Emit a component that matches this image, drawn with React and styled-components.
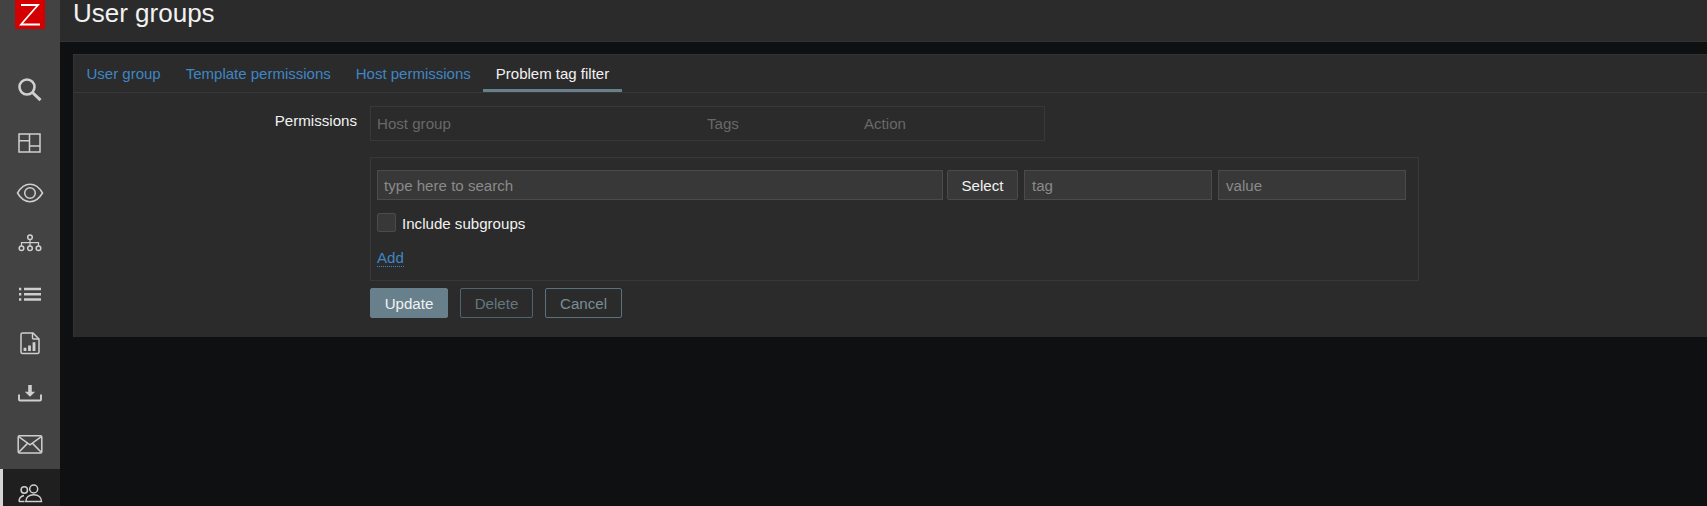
import React from "react";
import styled, { createGlobalStyle } from "styled-components";

const Global = createGlobalStyle`
  html, body { margin: 0; padding: 0; height: 100%; background: #0e1012; overflow: hidden; }
  * { box-sizing: border-box; }
  body { font-family: "Liberation Sans", Arial, sans-serif; font-size: 15.1px; }
`;

const Page = styled.div`
  display: grid;
  grid-template-columns: 60px 1fr;
  height: 506px;
  overflow: hidden;
`;

const Sidebar = styled.aside`
  background: #434343;
  box-shadow: 2px 0 4px rgba(0, 0, 0, 0.25);
  display: flex;
  flex-direction: column;
  overflow: hidden;
  height: 506px;
`;

const Logo = styled.div`
  width: 30px;
  height: 29px;
  margin-left: 15px;
  background: #d40000;
  flex: none;
  display: flex;
  align-items: center;
  justify-content: center;
`;

const SearchBox = styled.div`
  height: 50px;
  margin-top: 35px;
  margin-bottom: 4px;
  padding-right: 2px;
  flex: none;
  display: flex;
  align-items: center;
  justify-content: center;
`;

const NavItem = styled.div`
  height: ${(p) => (p.$active ? "50px" : "50.2px")};
  flex: none;
  display: flex;
  align-items: center;
  justify-content: center;
  background: ${(p) => (p.$active ? "#1f1f1f" : "transparent")};
  border-left: ${(p) => (p.$active ? "3px solid #d4d4d4" : "0")};
  padding-right: ${(p) => (p.$active ? "4px" : "1px")};
`;

const Main = styled.main`
  min-width: 0;
  display: flex;
  flex-direction: column;
`;

const Header = styled.header`
  height: 42px;
  background: #2b2b2b;
  border-bottom: 1px solid #333;
  padding-left: 13px;
  flex: none;
`;

const Title = styled.h1`
  margin: 0;
  font-weight: 400;
  font-size: 26px;
  line-height: 26px;
  color: #f2f2f2;
`;

const Content = styled.div`
  padding: 12px 0 0 13px;
  flex: 1;
  background: #0e1012;
`;

const Panel = styled.section`
  background: #2b2b2b;
  border-top: 1px solid #333;
  border-left: 1px solid #333;
  height: 283px;
`;

const Tabs = styled.nav`
  display: flex;
  height: 38px;
  border-bottom: 1px solid #383838;
  font-size: 15px;
`;

const Tab = styled.a`
  padding: 0 12.5px;
  height: 37px;
  line-height: 38px;
  color: ${(p) => (p.$active ? "#f2f2f2" : "#3f86c6")};
  border-bottom: 3px solid ${(p) => (p.$active ? "#68808c" : "transparent")};
  white-space: nowrap;
`;

const FormRow = styled.div`
  display: grid;
  grid-template-columns: 283px 1049px;
  column-gap: 13px;
  padding-top: 13px;
`;

const Label = styled.div`
  text-align: right;
  color: #f2f2f2;
  line-height: 24px;
  padding-top: 3px;
`;

const Fields = styled.div`
  display: flex;
  flex-direction: column;
`;

const PermTable = styled.div`
  width: 675px;
  height: 35px;
  border: 1px solid #383838;
  display: grid;
  grid-template-columns: 330px 157px 1fr;
  padding-left: 6px;
  align-items: center;
  color: #686868;
`;

const AddBox = styled.div`
  margin-top: 16px;
  height: 124px;
  border: 1px solid #383838;
  padding: 12px 6px 0;
`;

const InputRow = styled.div`
  display: flex;
  gap: 5px;
`;

const Input = styled.div`
  width: ${(p) => p.$w}px;
  height: 30px;
  margin-left: ${(p) => p.$offset || 0}px;
  background: #383838;
  border: 1px solid #4b4b4b;
  padding-left: ${(p) => p.$pad || 6}px;
  line-height: 29px;
  color: #8a8a8a;
`;

const SelectButton = styled.button`
  width: 71px;
  height: 30px;
  margin-left: -1px;
  margin-right: 1px;
  background: #383838;
  border: 1px solid #4b4b4b;
  border-radius: 2px;
  color: #f2f2f2;
  font: inherit;
  padding: 0;
`;

const CheckRow = styled.label`
  display: flex;
  align-items: center;
  gap: 6px;
  margin-top: 13px;
  height: 19px;
  color: #f2f2f2;
`;

const CheckText = styled.span`
  padding-top: 2px;
`;

const CheckBox = styled.span`
  width: 19px;
  height: 19px;
  background: #383838;
  border: 1px solid #4b4b4b;
  border-radius: 2px;
  flex: none;
`;

const AddLink = styled.a`
  display: inline-block;
  margin-top: 18px;
  color: #3f86c6;
  line-height: 16px;
  border-bottom: 1px dotted #3f86c6;
`;

const Actions = styled.div`
  display: flex;
  gap: 12px;
  margin-top: 7px;
`;

const ActionButton = styled.button`
  width: ${(p) => p.$w}px;
  height: 30px;
  padding: 0;
  font: inherit;
  border-radius: 2px;
  border: 1px solid ${(p) => (p.$primary ? "#68808c" : p.$muted ? "#50646f" : "#5a727e")};
  background: ${(p) => (p.$primary ? "#68808c" : "transparent")};
  color: ${(p) => (p.$primary ? "#f2f2f2" : p.$muted ? "#64777f" : "#788e98")};
`;

const Svg = ({ children }) => (
  <svg width="26" height="26" viewBox="0 0 26 26" fill="none" stroke="#cfcfcf" strokeWidth="1.5" style={{ overflow: "visible" }}>
    {children}
  </svg>
);

const icons = [
  <Svg key="d">
    <rect x="2" y="4" width="21" height="18" />
    <path d="M12.5 4v18M2 10.700h10.500M12.500 16H23" />
  </Svg>,
  <Svg key="e">
    <path d="M0.500 13C4 7 8 4.300 13 4.300S22 7 25.500 13C22 19 18 21.700 13 21.700S4 19 0.500 13z" />
    <circle cx="13" cy="13" r="5.300" />
  </Svg>,
  <Svg key="h">
    <circle cx="13" cy="7.300" r="2.300" />
    <circle cx="4.500" cy="18.300" r="2.300" />
    <circle cx="13" cy="18.300" r="2.300" />
    <circle cx="21.500" cy="18.300" r="2.300" />
    <path d="M13 9.600v6.400M4.500 16v-3.300h17V16" strokeWidth="1.200" />
  </Svg>,
  <Svg key="l">
    <path d="M2 8h2.300M7 8h17M2 13.300h2.300M7 13.300h17M2 18.500h2.300M7 18.500h17" strokeWidth="2.500" />
  </Svg>,
  <Svg key="r">
    <g transform="translate(0,-0.8)">
      <path d="M5.500 2.800h10.500l6 6v13a1.500 1.500 0 0 1-1.500 1.500h-15A1.500 1.500 0 0 1 4 21.800v-17.500a1.500 1.500 0 0 1 1.500-1.500z" />
      <path d="M15.500 2.800v5a1 1 0 0 0 1 1h5.500" />
      <path d="M8 20.800v-3.300M12.500 20.800v-5.600M17 20.800V12" strokeWidth="2.800" />
    </g>
  </Svg>,
  <Svg key="dl">
    <path d="M13 4v7.500" strokeWidth="3.600" />
    <path d="M7.800 10.700h10.400L13 15.800z" fill="#cfcfcf" stroke="none" />
    <path d="M2 13.500v5a1 1 0 0 0 1 1h20a1 1 0 0 0 1-1v-5" strokeWidth="1.900" />
  </Svg>,
  <Svg key="m">
    <rect x="1.200" y="4.700" width="23.600" height="17.300" rx="1.200" />
    <path d="M2 5.800l11 8 11-8M2 21l8.500-8.600M24 21l-8.500-8.600" />
  </Svg>,
];

const UsersIcon = () => (
  <Svg>
    <circle cx="7.300" cy="9" r="3.200" />
    <circle cx="16.700" cy="8" r="4" />
    <path d="M2 20.500c.1-3.200 1.800-5.400 5-6M2 20.500h5.500" />
    <path d="M8.800 20.500c0-4.200 3.200-6.800 7.900-6.800s7.800 2.600 7.800 6.800z" />
  </Svg>
);

export default function App() {
  return (
    <Page>
      <Global />
      <Sidebar>
        <Logo>
          <svg width="24" height="24" viewBox="0 0 24 24" fill="none" stroke="#fff" strokeWidth="1.800">
            <path d="M3 2h17L3 21.500h19" />
          </svg>
        </Logo>
        <SearchBox>
          <svg width="26" height="26" viewBox="0 0 26 26" fill="none" stroke="#cfcfcf">
            <circle cx="11" cy="11" r="7.500" strokeWidth="2.600" />
            <path d="M16.500 16.500l8 7.700" strokeWidth="3" />
          </svg>
        </SearchBox>
        {icons.map((icon) => (
          <NavItem key={icon.key}>{icon}</NavItem>
        ))}
        <NavItem $active>
          <UsersIcon />
        </NavItem>
      </Sidebar>
      <Main>
        <Header>
          <Title>User groups</Title>
        </Header>
        <Content>
          <Panel>
            <Tabs>
              <Tab>User group</Tab>
              <Tab>Template permissions</Tab>
              <Tab>Host permissions</Tab>
              <Tab $active>Problem tag filter</Tab>
            </Tabs>
            <FormRow>
              <Label>Permissions</Label>
              <Fields>
                <PermTable>
                  <span>Host group</span>
                  <span>Tags</span>
                  <span>Action</span>
                </PermTable>
                <AddBox>
                  <InputRow>
                    <Input $w={566}>type here to search</Input>
                    <SelectButton>Select</SelectButton>
                    <Input $w={188} $pad={7}>tag</Input>
                    <Input $w={188} $pad={7} $offset={1}>value</Input>
                  </InputRow>
                  <CheckRow>
                    <CheckBox />
                    <CheckText>Include subgroups</CheckText>
                  </CheckRow>
                  <AddLink>Add</AddLink>
                </AddBox>
                <Actions>
                  <ActionButton $primary $w={78}>Update</ActionButton>
                  <ActionButton $muted $w={73}>Delete</ActionButton>
                  <ActionButton $w={77}>Cancel</ActionButton>
                </Actions>
              </Fields>
            </FormRow>
          </Panel>
        </Content>
      </Main>
    </Page>
  );
}
